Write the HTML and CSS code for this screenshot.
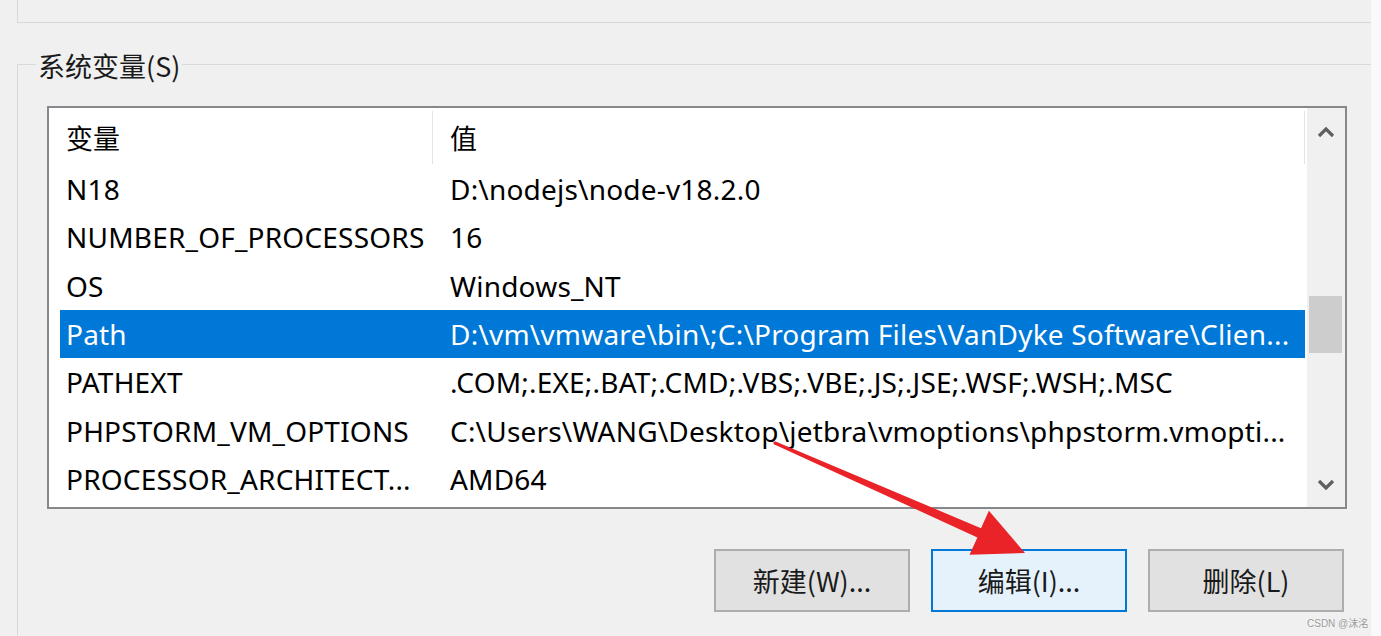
FILE: index.html
```html
<!DOCTYPE html>
<html lang="zh-CN">
<head>
<meta charset="utf-8">
<title>系统变量</title>
<link rel="stylesheet" href="styles.css">
</head>
<body>
<div class="screen">
  <div class="dialog">
    <div class="prev-group"></div>
    <div class="group">
      <div class="group-label">系统变量(S)</div>
      <div class="listbox">
        <div class="list">
          <div class="list-head">
            <div class="head-name">变量</div>
            <div class="head-value">值</div>
          </div>
          <div class="row"><div class="name">N18</div><div class="value">D:\nodejs\node-v18.2.0</div></div>
          <div class="row"><div class="name">NUMBER_OF_PROCESSORS</div><div class="value">16</div></div>
          <div class="row"><div class="name">OS</div><div class="value">Windows_NT</div></div>
          <div class="row selected"><div class="name">Path</div><div class="value">D:\vm\vmware\bin\;C:\Program Files\VanDyke Software\Clien...</div></div>
          <div class="row"><div class="name">PATHEXT</div><div class="value">.COM;.EXE;.BAT;.CMD;.VBS;.VBE;.JS;.JSE;.WSF;.WSH;.MSC</div></div>
          <div class="row"><div class="name">PHPSTORM_VM_OPTIONS</div><div class="value">C:\Users\WANG\Desktop\jetbra\vmoptions\phpstorm.vmopti...</div></div>
          <div class="row"><div class="name">PROCESSOR_ARCHITECT...</div><div class="value">AMD64</div></div>
        </div>
        <div class="scrollbar">
          <div class="sb-btn sb-up">
            <svg width="18" height="12" viewBox="0 0 18 12"><path d="M2 10 L9 3 L16 10" fill="none" stroke="#606060" stroke-width="3.2"/></svg>
          </div>
          <div class="sb-track"><div class="sb-thumb"></div></div>
          <div class="sb-btn sb-down">
            <svg width="18" height="12" viewBox="0 0 18 12"><path d="M2 2 L9 9 L16 2" fill="none" stroke="#606060" stroke-width="3.2"/></svg>
          </div>
        </div>
      </div>
      <div class="buttons">
        <div class="btn">新建(W)...</div>
        <div class="btn btn-focus">编辑(I)...</div>
        <div class="btn">删除(L)</div>
      </div>
    </div>
  </div>
  <svg class="arrow" width="1381" height="636" viewBox="0 0 1381 636">
    <polygon fill="#ea2329" points="775.6,441.6 981,528.2 988.9,510.8 1025,553 969.5,554.8 977.4,537.4 774.4,444.4"/>
    <circle cx="775" cy="443" r="1.6" fill="#ea2329"/>
  </svg>
  <div class="watermark">CSDN @沫洺</div>
</div>
</body>
</html>
```

FILE: styles.css
```css
* { box-sizing: border-box; }
html, body { margin: 0; padding: 0; }
body {
  font-family: "Noto Sans", "Noto Sans CJK SC", sans-serif;
  color: #000;
  background: #f9f9f9;
}
.screen {
  position: relative;
  width: 1381px;
  height: 636px;
  overflow: hidden;
  background: #f9f9f9;
}
.dialog {
  width: 1371px;
  height: 636px;
  background: #f0f0f0;
  padding-left: 17px;
}
.prev-group {
  height: 23px;
  border-left: 1px solid #d9d9d9;
  border-bottom: 1px solid #d9d9d9;
}
.group {
  margin-top: 41px;
  height: 580px;
  border-top: 1px solid #d9d9d9;
  border-left: 1px solid #d9d9d9;
}
.group-label {
  width: fit-content;
  margin: -17px 0 0 18px;
  padding: 0 2px;
  background: #f0f0f0;
  font-size: 27px;
  line-height: 35px;
  color: #1a1a1a;
  font-family: "Noto Sans CJK SC", sans-serif;
}
.listbox {
  display: flex;
  margin: 23px 0 0 29px;
  width: 1300px;
  height: 403px;
  border: 2px solid #86888c;
  background: #fff;
}
.list {
  flex: 1;
  padding: 0 2px 0 11px;
  font-size: 28px;
  letter-spacing: 0.2px;
}
.list-head {
  display: flex;
  height: 57px;
  align-items: stretch;
}
.head-name, .head-value {
  display: flex;
  align-items: center;
  margin: 3px 0 1px;
  border-right: 1px solid #e3e3e3;
  font-family: "Noto Sans CJK SC", sans-serif;
  font-size: 27px;
  letter-spacing: 0;
}
.head-name { width: 373px; padding-left: 6px; }
.head-value { flex: 1; padding-left: 17px; }
.row {
  display: flex;
  align-items: center;
  height: 48.3px;
  white-space: nowrap;
  overflow: hidden;
}
.row .name { width: 385px; padding-left: 6px; overflow: hidden; }
.row .value { flex: 1; padding-left: 5px; overflow: hidden; }
.row.selected { background: #0078d7; color: #fff; }
.scrollbar {
  width: 38px;
  display: flex;
  flex-direction: column;
  background: #f0f0f0;
}
.sb-btn {
  display: flex;
  align-items: center;
  justify-content: center;
}
.sb-up { height: 48px; }
.sb-down { height: 44px; }
.sb-track { flex: 1; padding: 0 3px 0 2px; }
.sb-thumb {
  margin-top: 140px;
  height: 57px;
  background: #cdcdcd;
}
.buttons {
  display: flex;
  gap: 21px;
  margin: 40px 0 0 696px;
}
.btn {
  width: 196px;
  height: 63px;
  display: flex;
  align-items: center;
  justify-content: center;
  border: 2px solid #adadad;
  background: #e1e1e1;
  font-size: 27px;
  font-family: "Noto Sans CJK SC", sans-serif;
  color: #1a1a1a;
}
.btn-focus {
  border-color: #0078d7;
  background: #e5f1fb;
}
.arrow {
  position: absolute;
  left: 0;
  top: 0;
  pointer-events: none;
}
.watermark {
  position: absolute;
  left: 1307px;
  top: 615px;
  font-family: "Liberation Sans", "Noto Sans CJK SC", sans-serif;
  font-size: 10px;
  color: #9a9a9a;
  text-shadow: 0 0 2px #fff;
}
```
